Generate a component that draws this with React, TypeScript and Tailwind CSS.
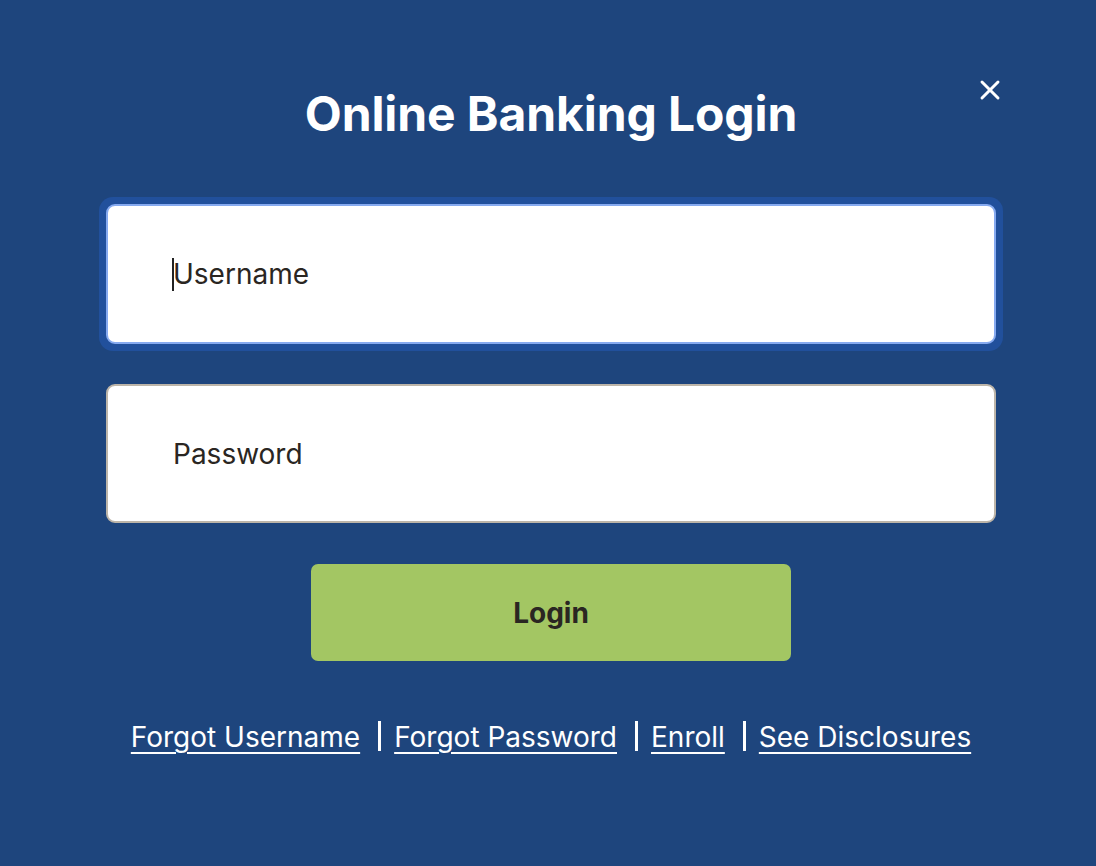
import { X } from "lucide-react";

const links = ["Forgot Username", "Forgot Password", "Enroll", "See Disclosures"];

export default function App() {
  return (
    <div
      className="min-h-[866px] w-full bg-[#1e457d] text-white"
      style={{ fontFamily: "Inter, 'Noto Sans', sans-serif" }}
    >
      <div className="relative mx-auto flex w-[1096px] flex-col items-center pl-[6px] pt-[84px]">
        <button className="absolute right-[90px] top-[74px] text-white" aria-label="Close">
          <X className="h-8 w-8" strokeWidth={2.2} />
        </button>

        <h1 className="text-[48px] font-bold leading-[60px] tracking-[-0.1px]">Online Banking Login</h1>

        <div className="mt-[53px] w-[904px] rounded-[14px] bg-[#21509c] p-[7px]">
          <div className="flex h-[140px] items-center rounded-[9px] border-2 border-[#86aaf0] bg-white pl-[64px]">
            <span className="mr-[-1px] h-[33px] w-[2px] bg-[#222]" />
            <span className="text-[28px] text-[#2a2622]">Username</span>
          </div>
        </div>

        <div className="mt-[33px] flex h-[139px] w-[890px] items-center rounded-[9px] border-2 border-[#bdb5a9] bg-white pl-[65px]">
          <span className="text-[28px] text-[#2a2622]">Password</span>
        </div>

        <button className="mt-[41px] flex h-[97px] w-[480px] items-center justify-center rounded-[7px] bg-[#a3c663] text-[28px] font-bold text-[#2a2622]">
          Login
        </button>

        <div className="mt-[55px] flex items-center text-[28px]">
          {links.map((l, i) => (
            <div key={l} className="flex items-center">
              {i > 0 && <span className="ml-[18px] mr-[13px] mb-[2px] h-[30px] w-[3px] bg-white" />}
              <a href="#" className="underline decoration-2 underline-offset-[5px]">
                {l}
              </a>
            </div>
          ))}
        </div>
      </div>
    </div>
  );
}
